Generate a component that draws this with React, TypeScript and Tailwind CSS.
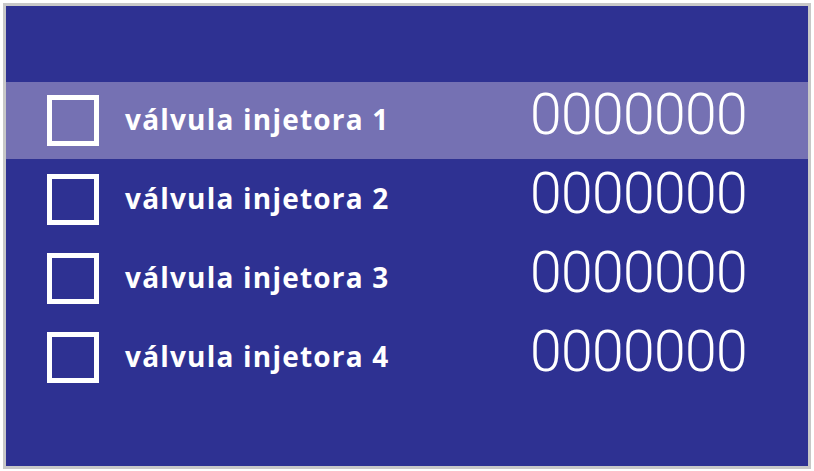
const valves = [
  { label: 'válvula injetora 1', count: '0000000', selected: true },
  { label: 'válvula injetora 2', count: '0000000', selected: false },
  { label: 'válvula injetora 3', count: '0000000', selected: false },
  { label: 'válvula injetora 4', count: '0000000', selected: false },
];

function ValveRow({ label, count, selected }: { label: string; count: string; selected: boolean }) {
  return (
    <div
      className={
        'flex h-[77px] items-center pl-[41px] pr-[61px] ' + (selected ? 'bg-[#7571b3]' : 'bg-transparent')
      }
    >
      <div className="h-[51px] w-[52px] shrink-0 border-[5px] border-white" />
      <span
        className="mb-[4px] ml-[26px] text-[28px] font-bold tracking-[1.2px] text-white"
        style={{ fontFamily: '"Open Sans", sans-serif' }}
      >
        {label}
      </span>
      <span
        className="mb-[12px] ml-auto text-[57px] font-light leading-none tracking-[-0.6px] text-white"
        style={{ fontFamily: 'Roboto, sans-serif' }}
      >
        {count}
      </span>
    </div>
  );
}

export default function App() {
  return (
    <div className="h-[471px] w-[814px] bg-white pl-[3px] pr-[3px] pt-[3px] pb-[2px]">
      <div className="flex h-full flex-col border-[3px] border-[#c8c8c8] bg-[#2e3192] pt-[76px]">
        <div className="flex flex-col gap-[2px]">
          {valves.map((v) => (
            <ValveRow key={v.label} {...v} />
          ))}
        </div>
      </div>
    </div>
  );
}
